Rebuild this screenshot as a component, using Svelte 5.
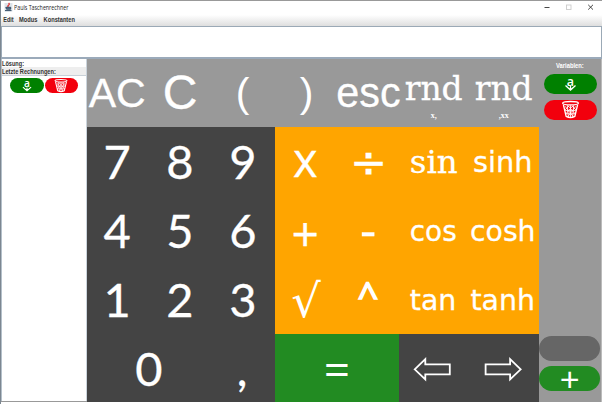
<script>
  const arial = "'Liberation Sans', Arial, sans-serif";
  const lato = "Lato, sans-serif";
  const open = "'Open Sans', sans-serif";
  const deja = "'DejaVu Sans', Verdana, sans-serif";
  const serif = "'DejaVu Serif', serif";

  // x: centre of the label, y: baseline, w: label advance, all relative to the key
  const keys = [
    { t: 'AC', tone: 'light', f: arial, s: 41, x: 30.2, y: 48.3, w: 57 },
    { t: 'C', tone: 'light', f: arial, s: 48, x: 30, y: 50.3 },
    { t: '(', tone: 'light', f: arial, s: 41, x: 30.5, y: 48, thin: true },
    { t: ')', tone: 'light', f: arial, s: 41, x: 31.5, y: 48, thin: true },
    { t: 'esc', tone: 'light', f: arial, s: 42.5, x: 31.5, y: 48, w: 64.3 },
    { t: 'rnd', tone: 'light', f: serif, s: 33.5, x: 34.7, y: 41.3, w: 58, sub: 'x,' },
    { t: 'rnd', tone: 'light', f: serif, s: 33.5, x: 34.7, y: 41.3, w: 58, sub: ',xx' },

    { t: '7', tone: 'dark', f: lato, s: 47, x: 30.2, y: 52.2 },
    { t: '8', tone: 'dark', f: lato, s: 47, x: 30, y: 52.2 },
    { t: '9', tone: 'dark', f: lato, s: 47, x: 31, y: 52.2 },
    { t: 'x', tone: 'orange', f: open, s: 47, x: 30.3, y: 50.3 },
    { t: '÷', tone: 'orange', f: deja, s: 45, x: 31.7, y: 50 },
    { t: 'sin', tone: 'orange', f: serif, s: 32.5, x: 34.8, y: 46, w: 48 },
    { t: 'sinh', tone: 'orange', f: deja, s: 28.5, x: 33.8, y: 45.3, w: 59.5 },

    { t: '4', tone: 'dark', f: lato, s: 47, x: 30.2, y: 52.2 },
    { t: '5', tone: 'dark', f: lato, s: 47, x: 30, y: 52.2 },
    { t: '6', tone: 'dark', f: lato, s: 47, x: 31, y: 52.2 },
    { t: '+', tone: 'orange', f: open, s: 48, x: 30.3, y: 54.5 },
    { t: '-', tone: 'orange', f: open, s: 50, x: 31, y: 51.5 },
    { t: 'cos', tone: 'orange', f: deja, s: 28.5, x: 34.2, y: 45.3, w: 47 },
    { t: 'cosh', tone: 'orange', f: deja, s: 28.5, x: 33.8, y: 45.3, w: 65.5 },

    { t: '1', tone: 'dark', f: lato, s: 47, x: 30.2, y: 52.2 },
    { t: '2', tone: 'dark', f: lato, s: 47, x: 30, y: 52.2 },
    { t: '3', tone: 'dark', f: lato, s: 47, x: 31, y: 52.2 },
    { t: '√', tone: 'orange', f: serif, s: 46, x: 31, y: 51.8, w: 29.5, thin: true },
    { t: '^', tone: 'orange', f: open, s: 37, x: 31, y: 44, w: 20.8, heavy: true },
    { t: 'tan', tone: 'orange', f: deja, s: 28.5, x: 34, y: 45.3, w: 46.5 },
    { t: 'tanh', tone: 'orange', f: deja, s: 28.5, x: 33.7, y: 45.3, w: 64.5 },

    { t: '0', tone: 'dark', f: lato, s: 47, x: 62, y: 52.2, span: 2 },
    { t: ',', tone: 'dark', f: lato, s: 47, x: 30, y: 52.2 },
    { t: '=', tone: 'green', f: open, s: 46, x: 62, y: 52.3, span: 2, thin: true },
    { arrow: 'M15.7 35.3L26.3 25.2V30.3H50.8V40.3H26.3V45.4Z', tone: 'dark' },
    { arrow: 'M51.7 35.3L41.1 25.2V30.3H16.6V40.3H41.1V45.4Z', tone: 'dark' }
  ];
</script>

{#snippet recall()}
  <svg class="glyph" viewBox="0 0 12 14">
    <text x="6" y="9" text-anchor="middle" font-size="12.5">a</text>
    <path d="M1 8.6L6 13.1L11 8.6M6 9V12.6" />
  </svg>
{/snippet}

{#snippet bin()}
  <svg class="glyph" viewBox="0 0 16 16">
    <ellipse cx="8" cy="2.1" rx="7.4" ry="1.6" />
    <path d="M1.3 3.4L3.9 14.4Q8 16.6 12.1 14.4L14.7 3.4" />
    <path class="mesh" d="M3 5L10.5 14.7M5.8 4.5L12.3 12M9.3 4.5L13.3 8.5M13 5L5.5 14.7M10.2 4.5L3.7 12M6.7 4.5L2.7 8.5M3 9H13M3.5 12H12.5M5 4L6 15M8 4V15M11 4L10 15" />
  </svg>
{/snippet}

<div class="window">
  <header class="title">
    <svg class="java" viewBox="0 0 9 10">
      <rect x=".5" y="1" width="8" height="8.5" fill="#dde4ea" />
      <path d="M4.6 1Q6 2.3 4.5 3.2T4.6 5.4" stroke="#d33" fill="none" stroke-width="1.3" />
      <path d="M1.8 5.3H6.7V7.2H2.5ZM1 8.6H7.5" stroke="#364f68" fill="#58728a" />
    </svg>
    <svg class="caption" width="70" height="14"><text x="0" y="9.3" textLength="54.5" lengthAdjust="spacingAndGlyphs">Pauls Taschenrechner</text></svg>
    <svg class="controls" width="54" height="14" viewBox="0 0 54 14">
      <path d="M.5 6.5H5.5" stroke="#333" />
      <rect x="22.5" y="4" width="4.5" height="4.5" stroke="#ccc" />
      <path d="M44.2 3.8L49 8.6M49 3.8L44.2 8.6" stroke="#333" />
    </svg>
  </header>
  <nav>
    <svg width="90" height="12">
      <text x="2.3" y="7.3" textLength="10.4" lengthAdjust="spacingAndGlyphs">Edit</text>
      <text x="18" y="7.3" textLength="18.4" lengthAdjust="spacingAndGlyphs">Modus</text>
      <text x="42.6" y="7.3" textLength="31.3" lengthAdjust="spacingAndGlyphs">Konstanten</text>
    </svg>
  </nav>
  <div class="display"></div>
  <main>
    <aside class="history">
      <div class="line"><svg width="80" height="9"><text x="0" y="7" textLength="22" lengthAdjust="spacingAndGlyphs">Lösung:</text></svg></div>
      <div class="line alt"><svg width="80" height="9"><text x="0" y="6.7" textLength="53.8" lengthAdjust="spacingAndGlyphs">Letzte Rechnungen:</text></svg></div>
      <div class="pair">
        <button class="pill small go">{@render recall()}</button>
        <button class="pill small del">{@render bin()}</button>
      </div>
    </aside>
    <section class="keys">
      {#each keys as k}
        <button class="key {k.tone}" class:wide={k.span === 2}>
          <svg width="100%" height="100%">
            {#if k.arrow}
              <path class="arrow" d={k.arrow} />
            {:else}
              <text class:heavy={k.heavy} class:thin={k.thin} x={k.x} y={k.y} text-anchor="middle" font-family={k.f} font-size={k.s} textLength={k.w} lengthAdjust="spacingAndGlyphs">{k.t}</text>
              {#if k.sub}<text class="sub" x="34.7" y="58.5" text-anchor="middle">{k.sub}</text>{/if}
            {/if}
          </svg>
        </button>
      {/each}
    </section>
    <aside class="vars">
      <svg class="heading" width="61" height="14"><text x="17" y="9" textLength="27.8" lengthAdjust="spacingAndGlyphs">Variablen:</text></svg>
      <button class="pill mid go">{@render recall()}</button>
      <button class="pill mid del">{@render bin()}</button>
      <div class="spacer"></div>
      <button class="pill big off" aria-label="leer"></button>
      <button class="pill big add"><svg width="61" height="25"><text x="30.8" y="24.7" text-anchor="middle">+</text></svg></button>
    </aside>
  </main>
</div>

<style>
  * { box-sizing: border-box; }
  button { border: 0; margin: 0; padding: 0; }
  svg { display: block; flex: none; overflow: visible; }
  .window {
    width: 602px; height: 404px; overflow: hidden;
    display: flex; flex-direction: column;
    background: #fff;
    border-left: 1px solid #7c8791;
    border-top: 1px solid #999;
    font-family: 'Liberation Sans', Arial, sans-serif;
  }
  .title { height: 14px; display: flex; align-items: center; flex: none; }
  .java { width: 9px; height: 10px; margin: 0 1px 2px 3px; }
  .caption { font: 7px 'Open Sans', sans-serif; fill: #222; }
  .controls { margin-left: auto; margin-right: 4px; fill: none; stroke-width: .9; }
  nav {
    height: 11px; flex: none;
    background: linear-gradient(#fff, #dedede);
    font-size: 6.3px; font-weight: bold; fill: #333;
  }
  .display {
    height: 33px; flex: none;
    border: 1px solid #9ba9b6; border-bottom: 2px solid #9baaba;
    background: #fff;
  }
  main { display: flex; height: 343px; flex: none; border-bottom: 1px solid #999; }
  .history { width: 86px; border-left: 1px solid #b4c0ca; border-right: 1px solid #cbd4dc; }
  .line { height: 8px; font-size: 6.3px; font-weight: bold; fill: #333; }
  .alt { height: 9px; background: #eee; border-bottom: 1px solid #c9d1d8; }
  .pair { display: flex; gap: 1px; padding: 2px 0 0 8px; }
  .keys {
    width: 452px; height: 343px;
    display: grid;
    grid-template-columns: 63px 62px 63px 62px 62px 70px 70px;
    grid-template-rows: 68px 69px 69px 69px 68px;
  }
  .key { fill: #fff; color: #fff; }
  .key text { stroke: #fff; stroke-width: .3; }
  .key .heavy { stroke-width: 1.6; }
  .key .thin, .key .sub { stroke: none; }
  .wide { grid-column: span 2; }
  .light { background: #999; }
  .dark { background: #444; }
  .orange { background: #ffa500; }
  .green { background: #228b22; }
  .light svg { position: relative; z-index: 1; }
  .sub { font: bold 8px 'Liberation Serif', serif; }
  .arrow { fill: none; stroke: #fff; stroke-width: 1.8; }
  .vars {
    width: 63px; height: 343px; background: #999; border-right: 1px solid #bbb;
    display: flex; flex-direction: column; align-items: flex-start;
  }
  .heading { font-size: 6.3px; font-weight: bold; fill: #fff; margin-bottom: 1px; }
  .pill { display: flex; align-items: center; justify-content: center; border-radius: 13px; flex: none; }
  .small { width: 33.5px; height: 15px; }
  .mid { width: 53px; height: 19.5px; margin: 0 0 6.5px 4.5px; }
  .big { width: 61px; height: 25px; }
  .go { background: #008000; }
  .del { background: #f2000d; }
  .off { background: #666; margin-bottom: 5px; }
  .add { background: #228b22; margin-bottom: 11px; font-size: 34px; fill: #fff; }
  .spacer { flex: 1; }
  .glyph { fill: none; stroke: #fff; stroke-width: 1.3; }
  .glyph text { fill: #fff; stroke: none; font-family: 'Open Sans', sans-serif; font-weight: 600; }
  .glyph .mesh { stroke-width: .8; }
  .small .glyph { height: 13px; width: 14px; }
  .mid .glyph { height: 17px; width: 17px; }
  .mid.go .glyph { height: 14px; }
  .small.go .glyph { height: 11.5px; }
</style>
